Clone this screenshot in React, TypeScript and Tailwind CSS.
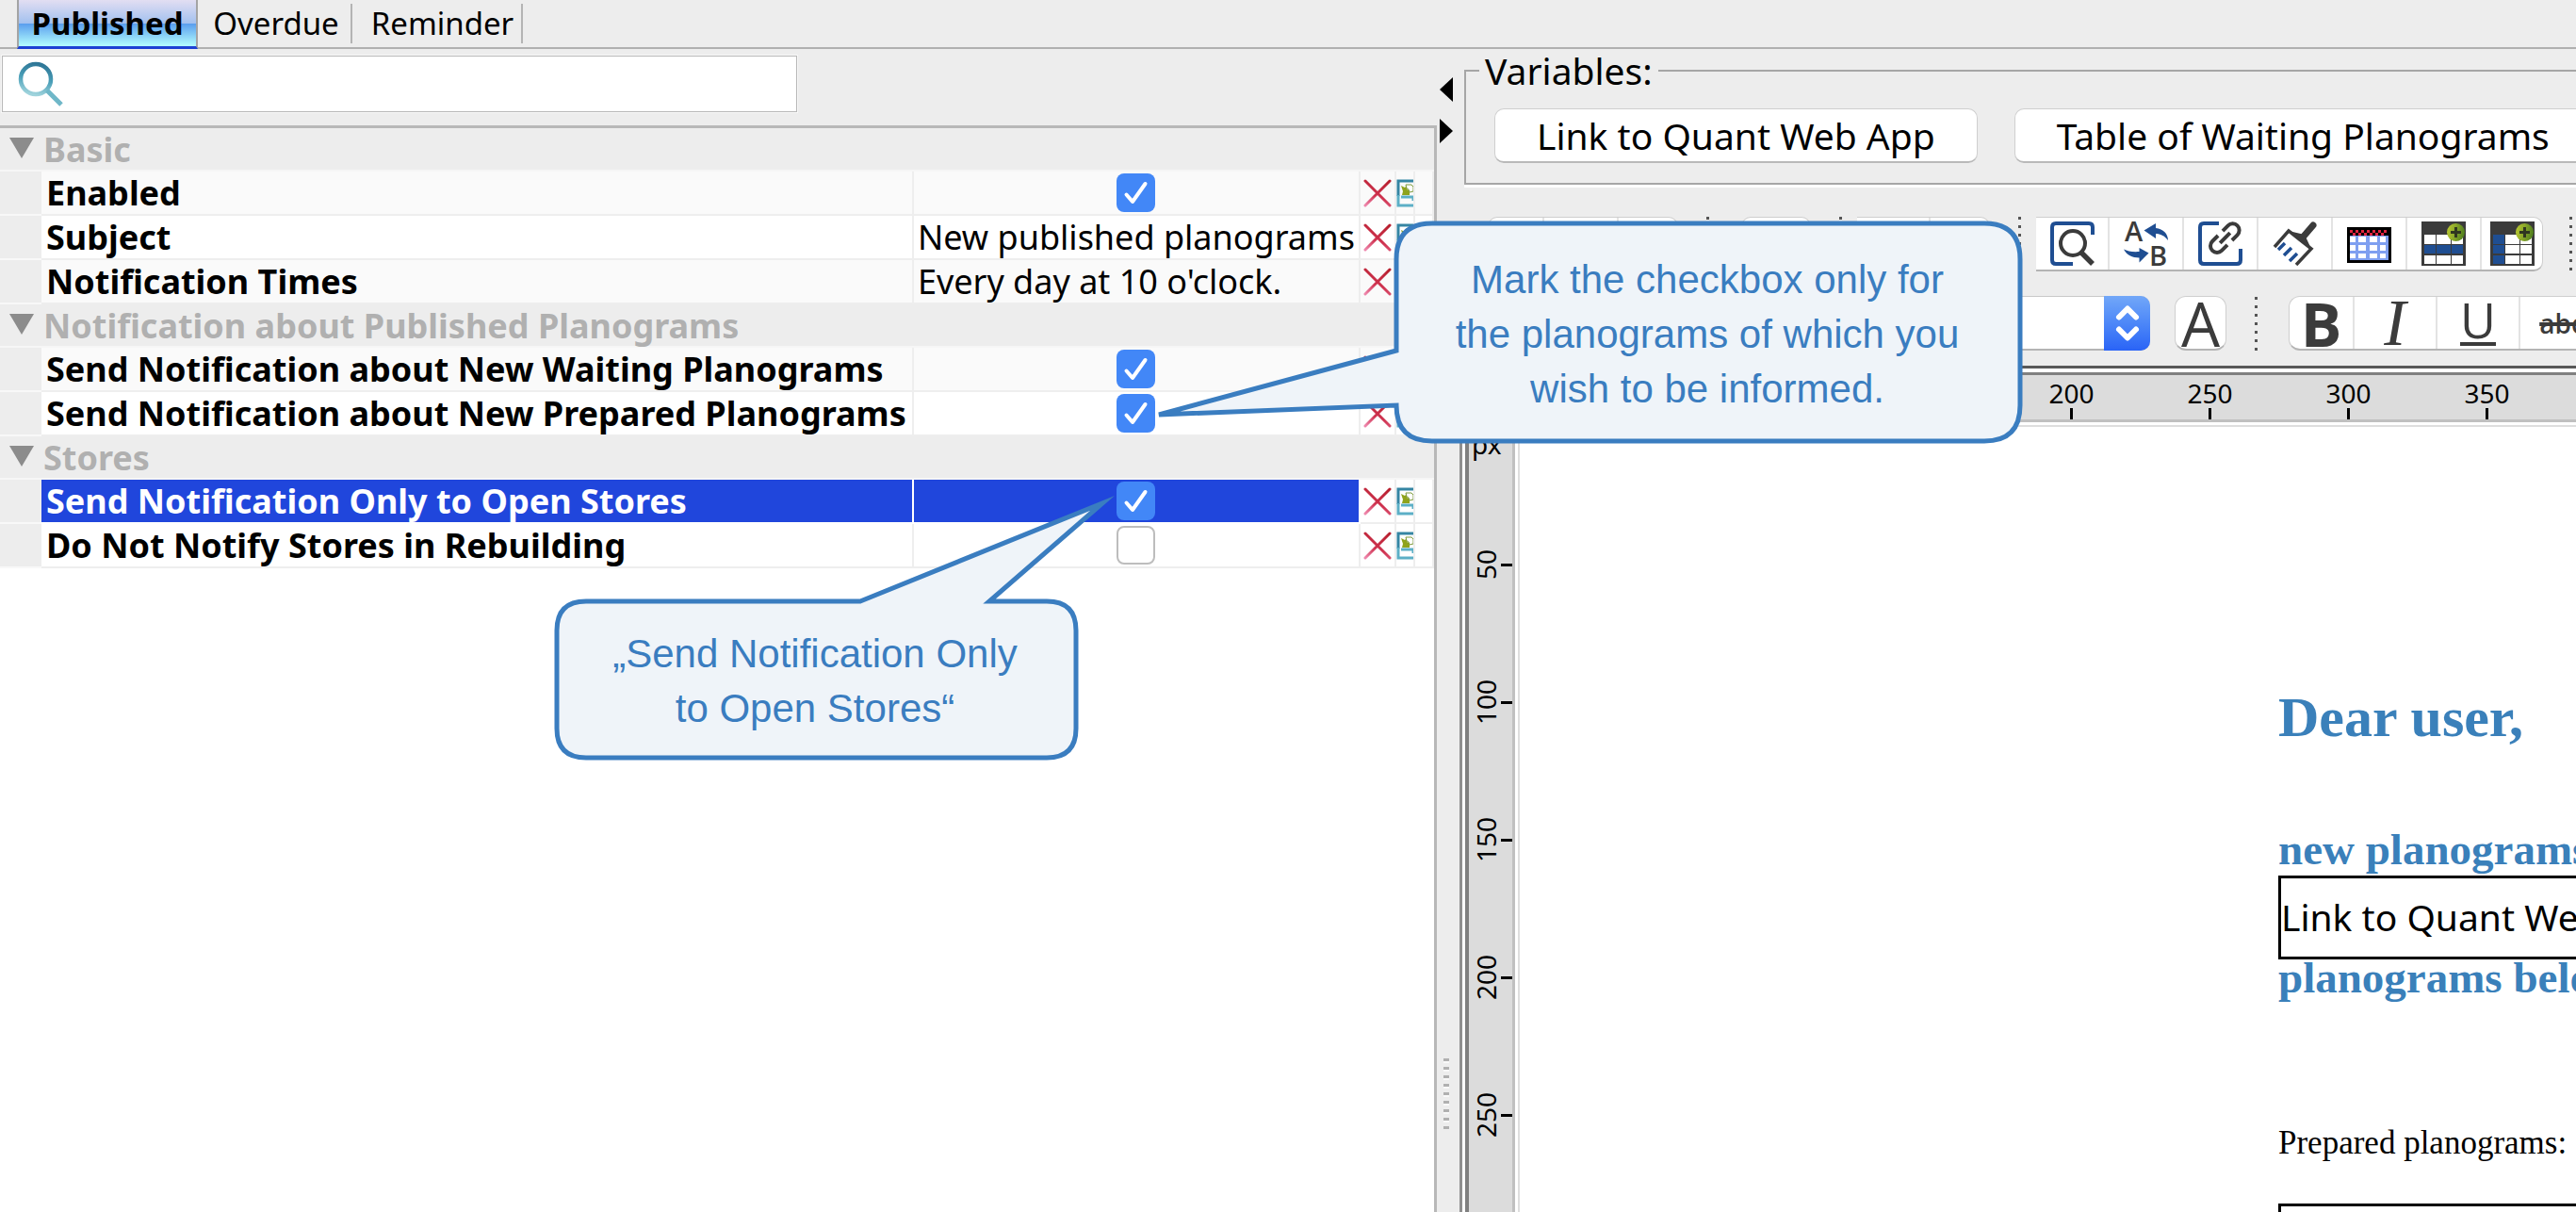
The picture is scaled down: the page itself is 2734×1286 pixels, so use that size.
import type { ReactNode } from "react"
import { ChevronDown, ChevronUp } from "lucide-react"

interface Setting {
  id: string
  label: string
  checked?: boolean
  value?: string
  selected?: boolean
}

interface SettingGroup {
  title: string
  settings: Setting[]
}

const groups: SettingGroup[] = [
  {
    title: "Basic",
    settings: [
      { id: "enabled", label: "Enabled", checked: true },
      { id: "subject", label: "Subject", value: "New published planograms" },
      { id: "times", label: "Notification Times", value: "Every day at 10 o'clock." }
    ]
  },
  {
    title: "Notification about Published Planograms",
    settings: [
      {
        id: "waiting",
        label: "Send Notification about New Waiting Planograms",
        checked: true
      },
      {
        id: "prepared",
        label: "Send Notification about New Prepared Planograms",
        checked: true
      }
    ]
  },
  {
    title: "Stores",
    settings: [
      {
        id: "open-stores",
        label: "Send Notification Only to Open Stores",
        checked: true,
        selected: true
      },
      {
        id: "rebuilding",
        label: "Do Not Notify Stores in Rebuilding",
        checked: false
      }
    ]
  }
]

const horizontalMarks = [50, 100, 150, 200, 250, 300, 350, 400]
const verticalMarks = [50, 100, 150, 200, 250, 300]

function SearchIcon() {
  return (
    <svg viewBox="0 0 48 48" className="size-12 shrink-0" fill="none">
      <defs>
        <linearGradient id="lens" x1="0.6" y1="0" x2="0.4" y2="1">
          <stop offset="0" stopColor="#2f7797" />
          <stop offset="0.5" stopColor="#4a9fb8" />
          <stop offset="1" stopColor="#9fd3dc" />
        </linearGradient>
      </defs>
      <circle cx="19" cy="19" r="16" stroke="url(#lens)" strokeWidth="4.5" />
      <path d="M31 31 46 46" stroke="#6fb7c8" strokeWidth="5" />
    </svg>
  )
}

function RemoveIcon() {
  return (
    <svg viewBox="0 0 30 30" className="size-[30px]" fill="none">
      <defs>
        <linearGradient id="cross" gradientUnits="userSpaceOnUse" x1="20" y1="0" x2="8" y2="30">
          <stop offset="0" stopColor="#b8202f" />
          <stop offset="0.6" stopColor="#cf3350" />
          <stop offset="1" stopColor="#ee86ac" />
        </linearGradient>
      </defs>
      <path d="M2 2 28 28M28 2 2 28" stroke="url(#cross)" strokeWidth="3" strokeLinecap="round" />
    </svg>
  )
}

function PluginIcon() {
  return (
    <svg viewBox="0 0 18 30" className="h-[30px] w-[18px]" fill="none">
      <path d="M18 2H2v16" stroke="#3585a3" strokeWidth="3" />
      <path d="M2 17v11h16M5 19h13v4" stroke="#5cafc6" strokeWidth="3" />
      <path d="M5 7l4 2 2-2v4l3 1v5H6l1-4z" fill="#8fa31c" />
      <path d="M10 6h6l2 2v5l-4 1-1-3-2-1z" fill="#ffffff" stroke="#7d9a3a" />
    </svg>
  )
}

function FindIcon() {
  return (
    <svg viewBox="0 0 47 47" className="size-[47px]" fill="none">
      <path d="M45 14V6Q45 2 41 2H6Q2 2 2 6v35q0 4 4 4h18" stroke="#1f4e92" strokeWidth="4" />
      <circle cx="24" cy="23" r="13" stroke="#3b3b3b" strokeWidth="4" />
      <path d="M33 33 45 45" stroke="#3b3b3b" strokeWidth="5.5" />
    </svg>
  )
}

function ReplaceIcon() {
  return (
    <svg viewBox="0 0 47 47" className="size-[47px] overflow-visible">
      <g fill="#3b3b3b" fontFamily="Open Sans, sans-serif" fontSize="29">
        <text x="1" y="21" fontWeight="600">A</text>
        <text x="27" y="47" fontWeight="600">B</text>
      </g>
      <g fill="#1f4e92">
        <path d="M21.5 9.5 34 2v5c8 1 13 6 13 13-4-5-8-7-13-7v5z" />
        <path d="M26.5 33.5 16.5 28v4C9 32.5 4 31.5 0 29.5c3 6 9 9 16.5 9v5z" />
      </g>
    </svg>
  )
}

function LinkIcon() {
  return (
    <svg viewBox="0 0 47 47" className="size-[47px]" fill="none">
      <path d="M22 2H6Q2 2 2 6v35q0 4 4 4h35q4 0 4-4V29" stroke="#1f4e92" strokeWidth="4" />
      <path
        d="M25 10.500H16.500a7 7 0 0 0 0 14H25M32 10.500h8a7 7 0 0 1 0 14H32M21 17.500h15"
        transform="rotate(-45 28.500 17.500)"
        stroke="#3b3b3b"
        strokeWidth="4"
      />
    </svg>
  )
}

function BrushIcon() {
  return (
    <svg viewBox="0 0 47 47" className="size-[47px]" fill="none">
      <path d="M43 4 31 18" stroke="#3b3b3b" strokeWidth="7" strokeLinecap="round" />
      <path d="M2 27 17 10 41 29 25 46" stroke="#3b3b3b" strokeWidth="3.5" />
      <path d="M17 10 41 29 34 14z" fill="#3b3b3b" />
      <path d="M6 30l7-7M12 36l8-8M18 42l8-8" stroke="#1f4e92" strokeWidth="3.500" />
    </svg>
  )
}

function CalendarIcon() {
  return (
    <svg viewBox="0 0 47 47" className="size-[47px]">
      <path d="M0 6h47v38H0z" fill="#000000" />
      <path d="M3 15h41v26H3z" fill="#7f9ff0" />
      <g stroke="#e02540" strokeWidth="3" strokeDasharray="3 3">
        <path d="M3 10.500h39" />
        <path d="M6 13.500h36" />
      </g>
      <g fill="#ffffff">
        <path d="M3 16h6v6H3zM12 16h8v6h-8zM24 16h8v6h-8zM35 16h6v6h-6z" />
        <path d="M3 25h6v6H3zM12 25h8v6h-8zM24 25h8v6h-8zM35 25h6v6h-6z" />
        <path d="M3 34h6v5H3zM12 34h8v5h-8zM24 34h8v5h-8zM35 34h6v5h-6z" />
      </g>
    </svg>
  )
}

function PlusBadge() {
  return (
    <>
      <defs>
        <linearGradient id="plus" x1="0" y1="0.4" x2="1" y2="0.6">
          <stop offset="0" stopColor="#b9c832" />
          <stop offset="1" stopColor="#4d7d1e" />
        </linearGradient>
      </defs>
      <circle cx="36.500" cy="11.500" r="9.500" fill="url(#plus)" />
      <path d="M36.500 6v11M31 11.500h11" stroke="#2f3620" strokeWidth="3" />
    </>
  )
}

function InsertRowIcon() {
  return (
    <svg viewBox="0 0 47 47" className="size-[47px]">
      <path d="M0 0h47v47H0z" fill="#3b3b3b" />
      <path d="M3 14h12v10H3zM16 14h15v10H16zM32 14h12v10H32z" fill="#ffffff" />
      <path d="M3 25h12v9H3zM16 25h15v9H16zM32 25h12v9H32z" fill="#1f4e92" />
      <path d="M3 36h12v9H3zM16 36h15v9H16zM32 36h12v9H32z" fill="#ffffff" />
      <PlusBadge />
    </svg>
  )
}

function InsertColumnIcon() {
  return (
    <svg viewBox="0 0 47 47" className="size-[47px] shrink-0">
      <path d="M0 0h47v47H0z" fill="#3b3b3b" />
      <path d="M3 14h12v10H3zM3 25h12v9H3zM3 36h12v9H3z" fill="#1f4e92" />
      <path d="M16 14h15v10H16zM16 25h15v9H16zM16 36h15v9H16z" fill="#ffffff" />
      <path d="M32 14h12v10H32zM32 25h12v9H32zM32 36h12v9H32z" fill="#ffffff" />
      <PlusBadge />
    </svg>
  )
}

function Tabs() {
  return (
    <nav role="tablist" className="flex h-[52px] shrink-0 border-b-2 border-[#b0b0b0] pl-[18px] text-[33px] leading-[48px]">
      <button
        role="tab"
        aria-selected="true"
        className="-mb-[2px] w-[192px] border-x-2 border-b-[3px] border-x-[#a4a4a4] border-b-[#1c41d4] bg-linear-[180deg,#e2def2_0%,#a3c1ef_50%,#5b9fee_52%,#b4ffff_100%] text-center font-bold">
        Published
      </button>
      <button
        role="tab"
        aria-selected="false"
        className="my-1 w-[164px] border-r-2 border-[#b4b4b4] pl-1 text-center leading-[40px]">
        Overdue
      </button>
      <button
        role="tab"
        aria-selected="false"
        className="my-1 w-[181px] border-r-2 border-[#b4b4b4] pl-3 text-center leading-[40px]">
        Reminder
      </button>
    </nav>
  )
}

function CheckBox({ id, checked }: { id: string; checked: boolean }) {
  return (
    <span className="mx-auto grid size-[41px]">
      <input
        id={id}
        type="checkbox"
        defaultChecked={checked}
        className="peer col-start-1 row-start-1 size-[41px] appearance-none rounded-lg border-2 border-[#bdbdbd] bg-white checked:border-0 checked:bg-[#4287f7]"
      />
      <svg
        viewBox="0 0 41 41"
        className="pointer-events-none invisible col-start-1 row-start-1 size-[41px] peer-checked:visible"
        fill="none">
        <path d="M10.500 22.500 17 30 30.500 11" stroke="#ffffff" strokeWidth="4" strokeLinecap="round" strokeLinejoin="round" />
      </svg>
    </span>
  )
}

function SettingRow({ setting, striped }: { setting: Setting; striped: boolean }) {
  const { id, label, checked, value, selected } = setting
  const rowBg = striped && !selected ? "bg-[#fafafa]" : "bg-white"
  const cellBg = selected ? "border-white bg-[#2046dc] text-white" : "border-[#eeeeee]"

  return (
    <tr className={`h-[47px] ${rowBg}`}>
      <td className="border-b-2 border-[#f8f8f8] bg-[#ededed]" />
      <th scope="row" className={`whitespace-nowrap border-b-2 border-r-2 pl-[5px] text-left font-bold ${cellBg}`}>
        <label htmlFor={id}>{label}</label>
      </th>
      <td className={`border-b-2 border-r-2 ${cellBg}`}>
        {value !== undefined ? (
          <input id={id} defaultValue={value} className="block h-[45px] w-full bg-transparent pl-1 outline-none" />
        ) : (
          <CheckBox id={id} checked={!!checked} />
        )}
      </td>
      <td className="border-b-2 border-r-2 border-[#eeeeee]">
        <button aria-label={`Clear ${label}`} className="mx-auto block">
          <RemoveIcon />
        </button>
      </td>
      <td className="border-b-2 border-r-2 border-[#eeeeee]">
        <button aria-label={`Use default for ${label}`} className="block">
          <PluginIcon />
        </button>
      </td>
      <td className="border-b-2 border-r-2 border-[#eeeeee]" />
    </tr>
  )
}

function SettingsTable() {
  return (
    <table className="w-full table-fixed border-separate border-spacing-0 text-[36px] leading-[41px]">
      <colgroup>
        <col className="w-[44px]" />
        <col />
        <col className="w-[474px]" />
        <col className="w-[38px]" />
        <col className="w-[20px]" />
        <col className="w-[20px]" />
      </colgroup>
      {groups.map((group) => (
        <tbody key={group.title}>
          <tr className="h-[46px] bg-[#ededed] text-[#b0b0b0]">
            <th colSpan={6} className="border-b-2 border-[#f6f6f6] p-0 text-left font-bold">
              <button className="flex h-[44px] w-full items-start gap-[10px] pl-[10px] text-left leading-[46px]">
                <svg viewBox="0 0 26 22" className="mt-[10px] h-[22px] w-[26px]" fill="#8c8c8c">
                  <path d="M0 0h26L13 22z" />
                </svg>
                {group.title}
              </button>
            </th>
          </tr>
          {group.settings.map((setting, i) => (
            <SettingRow key={setting.id} setting={setting} striped={i % 2 === 0} />
          ))}
        </tbody>
      ))}
    </table>
  )
}

interface CalloutProps {
  className: string
  viewBox: string
  outline: string
  textClassName: string
  children: ReactNode
}

function Callout({ className, viewBox, outline, textClassName, children }: CalloutProps) {
  return (
    <aside className={`pointer-events-none absolute z-10 ${className}`}>
      <svg viewBox={viewBox} className="absolute inset-0 size-full">
        <path d={outline} fill="#eff4f9" stroke="#3a7dc0" strokeWidth="5" strokeMiterlimit="8" />
      </svg>
      <p
        className={`relative text-center font-['Liberation_Sans',Arial,sans-serif] text-[42px] leading-[58px] text-[#3a7dc0] ${textClassName}`}>
        {children}
      </p>
    </aside>
  )
}

function SettingsPanel() {
  return (
    <section className="relative flex min-w-0 flex-col pt-[7px]">
      <label className="ml-[2px] flex h-[60px] w-[844px] items-center gap-2 border border-[#b8b8b8] bg-white pl-4 outline-1 outline-[#f8f8f8]">
        <SearchIcon />
        <input type="search" aria-label="Search settings" className="min-w-0 flex-1 text-[36px] outline-none" />
      </label>
      <div className="mt-[14px] min-h-0 flex-1 border-r-[3px] border-t-[3px] border-[#b8b8b8] bg-white">
        <SettingsTable />
      </div>

      <Callout
        className="left-[1226px] top-[182px] h-[239px] w-[922px]"
        viewBox="1226 234 922 239"
        outline="M1482 372V275Q1482 237 1520 237H2106Q2144 237 2144 275V430Q2144 468 2106 468H1520Q1482 468 1482 430L1230 440Z"
        textClassName="pl-[256px] pr-[6px] pt-[34px]">
        Mark the checkbox only for
        <br />
        the planograms of which you
        <br />
        wish to be informed.
      </Callout>
      <Callout
        className="left-[588px] top-[470px] h-[287px] w-[604px]"
        viewBox="588 522 604 287"
        outline="M913 638 1170 534 1050 638H1111Q1142 638 1142 669V773Q1142 804 1111 804H622Q591 804 591 773V669Q591 638 622 638Z"
        textClassName="pr-[50px] pt-[143px]">
        „Send Notification Only
        <br />
        to Open Stores“
      </Callout>
    </section>
  )
}

function Splitter() {
  return (
    <div role="separator" className="flex w-6 shrink-0 flex-col items-start pl-[3px] pt-[30px]">
      <button aria-label="Collapse left panel">
        <svg viewBox="0 0 14 26" className="h-[26px] w-[14px]">
          <path d="M14 0v26L0 13z" />
        </svg>
      </button>
      <button aria-label="Collapse right panel" className="mt-[18px]">
        <svg viewBox="0 0 14 26" className="h-[26px] w-[14px]">
          <path d="M0 0v26l14-13z" />
        </svg>
      </button>
      <div className="mb-[88px] ml-1 mt-auto h-[75px] w-[6px] bg-[repeating-linear-gradient(180deg,#b0b0b0_0px,#b0b0b0_3px,#f8f8f8_3px,#f8f8f8_5px,transparent_5px,transparent_9px)]" />
    </div>
  )
}

function VariableButton({ children }: { children: ReactNode }) {
  return (
    <button className="h-[58px] shrink-0 whitespace-nowrap rounded-[10px] border border-b-2 border-[#cfcfcf] border-b-[#b9b9b9] bg-white px-[44px] text-[39px] leading-[52px]">
      {children}
    </button>
  )
}

function ToolGroup({ className, children }: { className: string; children: ReactNode }) {
  return (
    <div
      className={`flex h-[58px] shrink-0 divide-x-2 divide-[#e3e3e3] overflow-hidden border-y border-b-2 border-t-[#cfcfcf] border-b-[#b4b4b4] bg-white ${className}`}>
      {children}
    </div>
  )
}

function Tool({ label, className, children }: { label: string; className: string; children?: ReactNode }) {
  return (
    <button aria-label={label} className={`flex shrink-0 items-center justify-center overflow-hidden text-[#3b3b3b] ${className}`}>
      {children}
    </button>
  )
}

function Grip({ className }: { className: string }) {
  return (
    <span
      className={`h-[57px] w-[3px] shrink-0 bg-[repeating-linear-gradient(180deg,#555555_0px,#555555_3px,transparent_3px,transparent_9px)] ${className}`}
    />
  )
}

function EditorToolbar() {
  return (
    <div className="flex flex-col gap-[26px] pl-[30px]">
      <div className="flex items-start">
        <ToolGroup className="rounded-[10px] border-x border-x-[#cfcfcf]">
          <Tool label="New" className="w-[59px]" />
          <Tool label="Open" className="w-[79px]" />
          <Tool label="Save" className="w-[62px]" />
        </ToolGroup>
        <Grip className="ml-[30px] mr-[34px]" />
        <ToolGroup className="rounded-[10px] border-x border-x-[#cfcfcf]">
          <Tool label="Print" className="w-[72px]" />
        </ToolGroup>
        <Grip className="ml-[30px] mr-4" />
        <ToolGroup className="rounded-r-[10px] border-r border-r-[#cfcfcf]">
          <Tool label="Undo" className="w-[78px]" />
          <Tool label="Redo" className="w-[62px]" />
        </ToolGroup>
        <Grip className="ml-[30px] mr-4" />
        <ToolGroup className="rounded-r-[10px] border-r border-r-[#cfcfcf]">
          <Tool label="Find" className="w-[78px]"><FindIcon /></Tool>
          <Tool label="Replace" className="w-[79px]"><ReplaceIcon /></Tool>
          <Tool label="Insert link" className="w-[79px]"><LinkIcon /></Tool>
          <Tool label="Clear formatting" className="w-[79px]"><BrushIcon /></Tool>
          <Tool label="Insert table" className="w-[79px]"><CalendarIcon /></Tool>
          <Tool label="Insert row" className="w-[79px]"><InsertRowIcon /></Tool>
          <Tool label="Insert column" className="w-[64px]"><InsertColumnIcon /></Tool>
        </ToolGroup>
        <Grip className="ml-[28px]" />
      </div>

      <div className="flex items-center">
        <span className="grid h-[58px] w-[703px] shrink-0 grid-cols-[minmax(0,1fr)_49px]">
          <select
            aria-label="Font size"
            className="col-span-2 col-start-1 row-start-1 appearance-none rounded-[10px] border border-b-2 border-[#c8c8c8] border-b-[#b4b4b4] bg-white"
          />
          <span className="pointer-events-none col-start-2 row-start-1 flex flex-col items-center justify-center rounded-r-[10px] bg-linear-to-b from-[#72a7f8] to-[#2a63f6] text-white">
            <ChevronUp size={36} strokeWidth={4} className="-my-[7px]" />
            <ChevronDown size={36} strokeWidth={4} className="-my-[7px]" />
          </span>
        </span>
        <ToolGroup className="ml-[26px] rounded-[12px] border-x border-x-[#cfcfcf]">
          <Tool label="Font color" className="w-[53px] font-['Open_Sans'] text-[65px] leading-[54px]">A</Tool>
        </ToolGroup>
        <Grip className="ml-[30px] mr-[33px]" />
        <ToolGroup className="rounded-l-[12px] border-l border-l-[#cfcfcf]">
          <Tool label="Bold" className="w-[69px] font-['Open_Sans'] text-[65px] font-bold leading-[54px]">B</Tool>
          <Tool label="Italic" className="w-[88px] font-['Liberation_Serif'] text-[70px] italic leading-[54px]">I</Tool>
          <Tool label="Underline" className="w-[88px]">
            <span className="border-b-4 border-[#3b3b3b] pb-1 font-['Open_Sans'] text-[52px] leading-[40px]">U</span>
          </Tool>
          <Tool label="Strikethrough" className="w-[88px]">
            <span className="font-['Open_Sans'] text-[28px] font-semibold line-through decoration-4">abc</span>
          </Tool>
        </ToolGroup>
      </div>
    </div>
  )
}

function DocumentBody() {
  return (
    <article className="ml-[3px] mt-[3px] min-w-0 flex-1 overflow-hidden whitespace-nowrap border-l-2 border-t-2 border-[#dedede] bg-white pl-[805px] font-['Liberation_Serif','Times_New_Roman',serif] text-[#3a80ba]">
      <h1 className="mt-[272px] text-[60px] font-bold leading-[72px]">Dear user,</h1>
      <h2 className="mt-[76px] text-[47px] font-bold leading-[56px]">new planograms</h2>
      <div className="h-[89px] w-[560px] border-[3px] border-black font-['Noto_Sans',sans-serif] text-[39px] leading-[82px] text-black">
        Link to Quant Web App
      </div>
      <h2 className="text-[47px] font-bold leading-[38px]">planograms below</h2>
      <p className="mt-[136px] text-[35px] leading-[42px] text-black">Prepared planograms:</p>
      <div className="mt-[43px] h-[89px] w-[560px] border-[3px] border-black" />
    </article>
  )
}

function Editor() {
  return (
    <div className="mt-[16px] flex min-h-0 flex-1 border-l-[3px] border-t-[3px] border-l-[#909090] border-t-[#585858] bg-white pl-[3px] pt-1">
      <div className="flex min-w-0 flex-1 flex-col border-l-[4px] border-t-[3px] border-[#808080] text-[28px] text-black">
        <div className="flex h-[50px] shrink-0 overflow-hidden border-b-[3px] border-[#c0c0c0] bg-[#dcdcdc] pl-[125px]">
          {horizontalMarks.map((mark) => (
            <div key={mark} className="flex w-[147px] shrink-0 flex-col items-center justify-end leading-[32px]">
              {mark}
              <span className="h-3 w-[3px] bg-black" />
            </div>
          ))}
        </div>
        <div className="flex min-h-0 flex-1">
          <div className="w-[49px] shrink-0 overflow-hidden border-r-[3px] border-[#c0c0c0] bg-[#dcdcdc]">
            <div className="h-[78px] pl-[3px] pt-1 text-[28px] leading-[38px]">px</div>
            {verticalMarks.map((mark) => (
              <div key={mark} className="flex h-[146px] items-center justify-end">
                <span className="rotate-180 leading-[32px] [writing-mode:vertical-rl]">{mark}</span>
                <span className="h-[3px] w-3 bg-black" />
              </div>
            ))}
          </div>
          <DocumentBody />
        </div>
      </div>
    </div>
  )
}

function TemplatePanel() {
  return (
    <section className="flex min-h-0 min-w-0 flex-1 flex-col overflow-hidden">
      <fieldset className="ml-[5px] mt-[4px] h-[140px] w-[1300px] shrink-0 border-2 border-[#a6a6a6] pl-[14px] shadow-[0_3px_0_#ffffff]">
        <legend className="px-[6px] text-[39px] leading-[38px]">Variables:</legend>
        <div className="flex gap-[39px] pl-[16px] pt-[21px]">
          <VariableButton>Link to Quant Web App</VariableButton>
          <VariableButton>Table of Waiting Planograms</VariableButton>
        </div>
      </fieldset>
      <div className="h-[34px] shrink-0" />
      <EditorToolbar />
      <Editor />
    </section>
  )
}

export default function App() {
  return (
    <main className="flex h-screen flex-col overflow-hidden bg-[#ededed] font-['Noto_Sans',sans-serif] text-black">
      <Tabs />
      <div className="grid min-h-0 flex-1 grid-cols-[minmax(0,1525fr)_minmax(0,1209fr)] grid-rows-[minmax(0,1fr)]">
        <SettingsPanel />
        <div className="flex min-h-0 min-w-0">
          <Splitter />
          <TemplatePanel />
        </div>
      </div>
    </main>
  )
}
